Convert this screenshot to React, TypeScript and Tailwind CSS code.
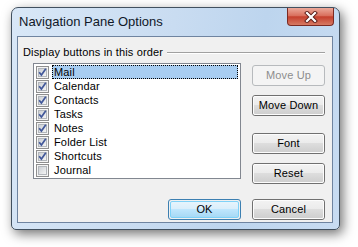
import React from 'react';

const items = [
  { label: 'Mail', checked: true },
  { label: 'Calendar', checked: true },
  { label: 'Contacts', checked: true },
  { label: 'Tasks', checked: true },
  { label: 'Notes', checked: true },
  { label: 'Folder List', checked: true },
  { label: 'Shortcuts', checked: true },
  { label: 'Journal', checked: false },
];

function CheckBox({ checked }: { checked: boolean }) {
  return (
    <svg width="13" height="13" viewBox="0 0 13 13" className="shrink-0">
      <defs>
        <linearGradient id="cbfill" x1="0" y1="0" x2="1" y2="1">
          <stop offset="0" stopColor="#c9cdd2" />
          <stop offset="1" stopColor="#f7f7f7" />
        </linearGradient>
      </defs>
      <rect x="0.5" y="0.5" width="12" height="12" fill="#f4f4f4" stroke="#8f8f8f" />
      <rect x="2.5" y="2.5" width="8" height="8" fill="url(#cbfill)" stroke="#b3b7bc" />
      {checked && (
        <path d="M3.2 6.2 L5.4 9 L9.8 2.8" fill="none" stroke="#42589a" strokeWidth="1.7" />
      )}
    </svg>
  );
}

function WinButton({ children, disabled, primary }: { children: React.ReactNode; disabled?: boolean; primary?: boolean }) {
  if (disabled) {
    return (
      <div className="w-[73px] h-[21px] rounded-[3px] border border-[#b7babd] bg-[#f4f4f4] flex items-center justify-center text-[#8d8d8d]">
        {children}
      </div>
    );
  }
  if (primary) {
    return (
      <div className="w-[73px] h-[21px] rounded-[3px] border border-[#3c7fb1] p-px">
        <div className="w-full h-full rounded-[2px] border border-[#7fd2f8] bg-[linear-gradient(#e6f4fc_0%,#d9eefb_48%,#bee6fd_50%,#a7d9f5_100%)] flex items-center justify-center text-black">
          {children}
        </div>
      </div>
    );
  }
  return (
    <div className="w-[73px] h-[21px] rounded-[3px] border border-[#707070]">
      <div className="w-full h-full rounded-[2px] border border-[#fcfcfc] bg-[linear-gradient(#f2f2f2_0%,#ebebeb_48%,#dddddd_50%,#cfcfcf_100%)] flex items-center justify-center text-black">
        {children}
      </div>
    </div>
  );
}

export default function App() {
  return (
    <div className="w-[358px] h-[247px] bg-white pt-[7px] pl-[11px] text-[11px] leading-[13px] font-['Liberation_Sans',Arial,sans-serif]">
      <div className="w-[329px] h-[223px] rounded-t-[7px] rounded-b-[5px] border border-[#41505f] bg-[linear-gradient(100deg,#d8e7f7_0%,#c9dcf1_45%,#bdd5ee_70%,#c8dcf2_100%)] shadow-[3px_4px_12px_rgba(0,0,0,0.55)] flex flex-col">
        <div className="h-[28px] flex justify-between shrink-0">
          <span className="pl-[7px] pt-[6px] text-[13px] leading-[16px] text-[#101828]">
            Navigation Pane Options
          </span>
          <div className="mr-[5px] w-[47px] h-[18px] rounded-b-[4px] border border-t-0 border-[#7b2a22] bg-[linear-gradient(#eca99a_0%,#d9705d_45%,#c5402d_52%,#d67a63_100%)] flex items-center justify-center">
            <svg width="14" height="12" viewBox="0 0 14 12">
              <path d="M3 2 L11 10 M11 2 L3 10" stroke="#5a1d18" strokeWidth="4" strokeLinecap="square" />
              <path d="M3 2 L11 10 M11 2 L3 10" stroke="#ffffff" strokeWidth="2.2" strokeLinecap="square" />
            </svg>
          </div>
        </div>

        <div className="ml-[5px] w-[316px] h-[187px] border border-[#6f84a0] bg-[#f0f0f0] flex flex-col text-black tracking-[0.15px]">
          <div className="mt-[9px] pl-[5px] pr-[7px] flex items-center">
            <span>Display buttons in this order</span>
            <div className="flex-1 ml-[4px] border-t border-[#a0a0a0] border-b border-b-white" />
          </div>

          <div className="mt-[4px] flex">
            <div className="ml-[15px] w-[208px] h-[116px] border border-[#828790] bg-white p-px">
              {items.map((it, i) => (
                <div key={it.label} className="h-[14px] flex items-center">
                  <div className="ml-px">
                    <CheckBox checked={it.checked} />
                  </div>
                  <span
                    className={
                      i === 0
                        ? 'ml-[3px] mr-px flex-1 h-[14px] pl-px border border-dotted border-black bg-[#a8cdf1] flex items-center'
                        : 'ml-[3px] mr-px flex-1 h-[14px] pl-px border border-transparent flex items-center'
                    }
                  >
                    {it.label}
                  </span>
                </div>
              ))}
            </div>
            <div className="ml-[11px] pt-[2px] flex flex-col">
              <WinButton disabled>Move Up</WinButton>
              <div className="mt-[9px]">
                <WinButton>Move Down</WinButton>
              </div>
              <div className="mt-[17px]">
                <WinButton>Font</WinButton>
              </div>
              <div className="mt-[9px]">
                <WinButton>Reset</WinButton>
              </div>
            </div>
          </div>

          <div className="mt-[15px] pr-[7px] flex justify-end gap-[11px]">
            <WinButton primary>OK</WinButton>
            <WinButton>Cancel</WinButton>
          </div>
        </div>
      </div>
    </div>
  );
}
